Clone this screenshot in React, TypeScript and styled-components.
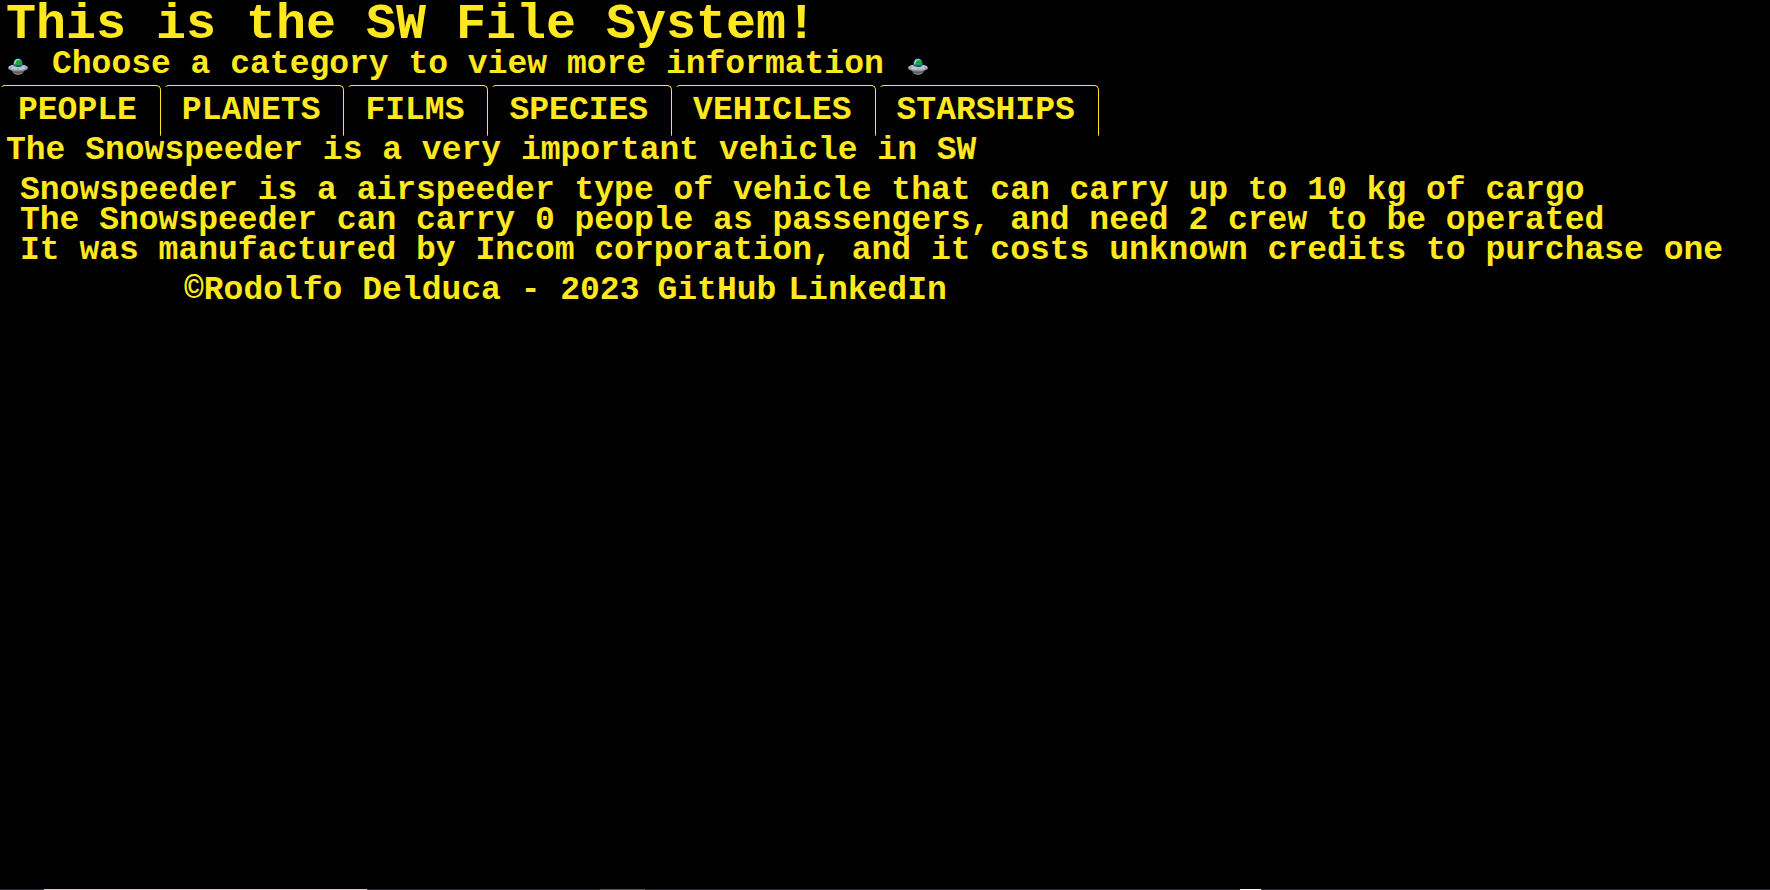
import React from "react";
import styled, { createGlobalStyle } from "styled-components";

const YELLOW = "#ffe81f";

const GlobalStyle = createGlobalStyle`
  * {
    box-sizing: border-box;
  }
  body {
    margin: 0;
    background: #000;
    color: ${YELLOW};
    font: bold 33px/30px "Liberation Mono", "Courier New", monospace;
  }
`;

const Page = styled.div`
  display: flex;
  flex-direction: column;
  min-height: 100vh;
`;

const Title = styled.h1`
  margin: 0;
  padding-left: 6px;
  font-size: 50px;
  line-height: 50px;
`;

const Subtitle = styled.p`
  display: flex;
  align-items: center;
  gap: 24px;
  margin: 0 0 5px;
  padding-left: 8px;
`;

const SaucerIcon = styled.svg`
  flex: none;
  width: 20px;
  height: 20px;
  margin-top: 4px;
`;

const Tabs = styled.nav`
  display: flex;
  gap: 3px;
`;

const Tab = styled.button`
  height: 51px;
  padding: 0 23px 0 17px;
  border: 1px solid transparent;
  border-top-color: ${YELLOW};
  border-right-color: ${YELLOW};
  border-radius: 5px 5px 0 0;
  background: none;
  color: inherit;
  font: inherit;
  cursor: pointer;
`;

const Heading = styled.h2`
  margin: 0 0 10px;
  padding-left: 6px;
  font-size: 33px;
`;

const Details = styled.section`
  padding-left: 20px;
`;

const Line = styled.p`
  margin: 0;
`;

const Footer = styled.footer`
  display: flex;
  margin-top: 10px;
  padding-left: 184px;
`;

const Links = styled.div`
  display: flex;
  gap: 12px;
  margin-left: 18px;
`;

const FooterLink = styled.a`
  color: inherit;
  text-decoration: none;
`;

const Strip = styled.div`
  display: flex;
  height: 1px;
  margin-top: auto;
  background: #2b2a31;
`;

const Segment = styled.div<{ $grow: number; $color?: string }>`
  flex: ${(p) => p.$grow} 0 0;
  background: ${(p) => p.$color ?? "transparent"};
`;

function Saucer() {
  return (
    <SaucerIcon viewBox="0 0 20 20" aria-hidden="true">
      <ellipse cx="10" cy="13.8" rx="6" ry="3.7" fill="#5c5e60" />
      <path d="M5 15.5q5 2.5 10 0l-2 1.6q-3 1-6 0z" fill="#a2a4a5" />
      <ellipse cx="10" cy="11" rx="10" ry="3.4" fill="#8d8f92" />
      <ellipse cx="10" cy="10.2" rx="9.4" ry="2.8" fill="#c2c3c6" />
      <path d="M5.4 9V6.3Q5.7 1.8 10 1.6q4.3.2 4.6 4.7V9q-4.6 2-9.2 0z" fill="#28758f" />
      <path d="M6.3 6.5Q6.5 2.4 10 2.2q1.8 0 2.7 1.2-3-1-4.5.8-1 1.3-.9 3.5z" fill="#d9f5f2" />
      <ellipse cx="10.5" cy="5.5" rx="2.7" ry="2.6" fill="#18bd27" />
      <path d="M8.7 5l1.4.8-.8.5zM12.5 5l-1.4.8.8.5z" fill="#075915" />
      <path d="M8 8.8q2.5-1.8 5 0l-.5 1h-4z" fill="#174773" />
      <circle cx="3" cy="10.5" r="0.9" fill="#6faedb" />
      <circle cx="10" cy="12" r="0.9" fill="#6faedb" />
      <circle cx="17" cy="10.5" r="0.9" fill="#6faedb" />
    </SaucerIcon>
  );
}

const categories = ["PEOPLE", "PLANETS", "FILMS", "SPECIES", "VEHICLES", "STARSHIPS"];

const details = [
  "Snowspeeder is a airspeeder type of vehicle that can carry up to 10 kg of cargo",
  "The Snowspeeder can carry 0 people as passengers, and need 2 crew to be operated",
  "It was manufactured by Incom corporation, and it costs unknown credits to purchase one",
];

export default function App() {
  return (
    <Page>
      <GlobalStyle />
      <header>
        <Title>This is the SW File System!</Title>
        <Subtitle>
          <Saucer />
          Choose a category to view more information
          <Saucer />
        </Subtitle>
      </header>
      <Tabs aria-label="Categories">
        {categories.map((name) => (
          <Tab key={name} type="button">
            {name}
          </Tab>
        ))}
      </Tabs>
      <main>
        <Heading>The Snowspeeder is a very important vehicle in SW</Heading>
        <Details>
          {details.map((text) => (
            <Line key={text}>{text}</Line>
          ))}
        </Details>
      </main>
      <Footer>
        <span>©Rodolfo Delduca - 2023</span>
        <Links>
          <FooterLink href="#github">GitHub</FooterLink>
          <FooterLink href="#linkedin">LinkedIn</FooterLink>
        </Links>
      </Footer>
      <Strip>
        <Segment $grow={44} />
        <Segment $grow={323} $color="#d3cbcb" />
        <Segment $grow={233} />
        <Segment $grow={45} $color="#5b5858" />
        <Segment $grow={595} />
        <Segment $grow={21} $color="#fffafa" />
        <Segment $grow={509} />
      </Strip>
    </Page>
  );
}
